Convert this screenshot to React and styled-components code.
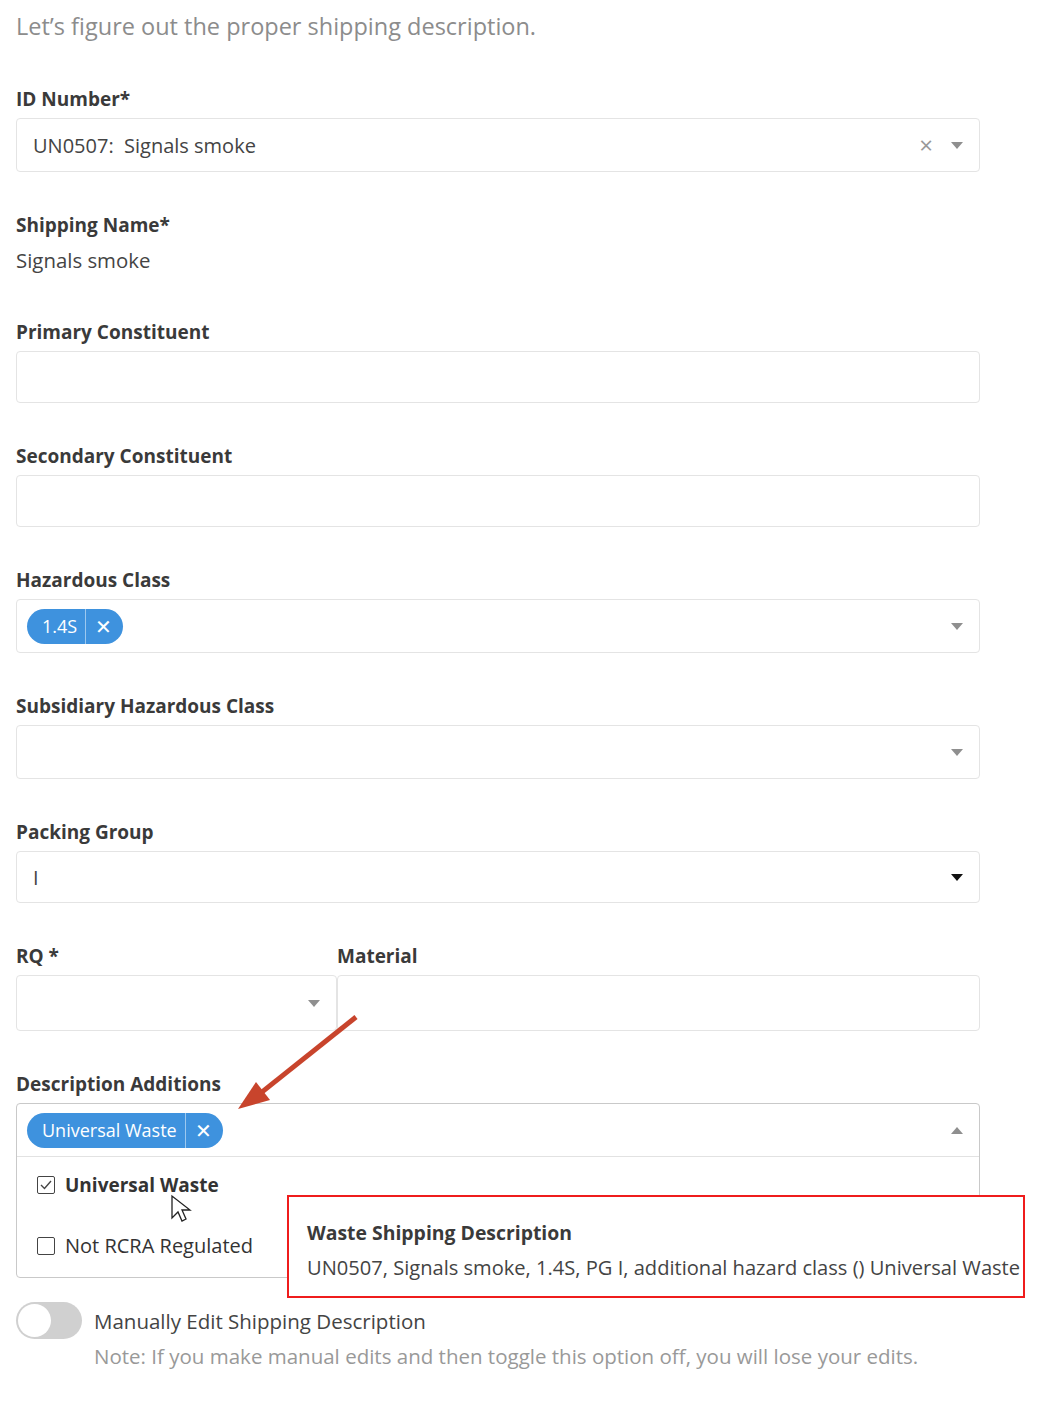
import React from "react";
import styled, { createGlobalStyle } from "styled-components";

const Global = createGlobalStyle`
  body {
    margin: 0;
    background: #fff;
    font-family: "Open Sans", "Noto Sans", sans-serif;
    color: #333;
  }
`;

const Page = styled.div`
  position: relative;
  width: 964px;
  padding: 8px 16px 40px;
`;

const Intro = styled.p`
  margin: 0 0 41px;
  font-size: 23.5px;
  line-height: 36px;
  color: #8c8c8c;
`;

const Field = styled.div`
  margin-bottom: ${(p) => p.gap || 39}px;
`;

const Label = styled.div`
  font-size: 19px;
  font-weight: 700;
  line-height: 28px;
  margin-bottom: 5px;
  color: #3a3a3a;
`;

const Value = styled.div`
  font-size: 20.4px;
  line-height: 32px;
  color: #444;
`;

const Box = styled.div`
  display: flex;
  align-items: center;
  height: ${(p) => p.h || 52}px;
  box-sizing: border-box;
  padding: 0 16px 0 ${(p) => (p.tags ? 10 : 16)}px;
  border: 1px solid #e4e4e4;
  border-radius: 4px;
  font-size: 20px;
  color: #444;
`;

const Grow = styled.div`
  flex: 1;
`;

const Caret = styled.span`
  width: 0;
  height: 0;
  margin-left: 18px;
  border-left: 6px solid transparent;
  border-right: 6px solid transparent;
  border-top: ${(p) => (p.up ? "none" : `7px solid ${p.dark ? "#111" : "#8f8f8f"}`)};
  border-bottom: ${(p) => (p.up ? "7px solid #8f8f8f" : "none")};
`;

const Clear = styled.span`
  color: #999;
  font-size: 24px;
  line-height: 1;
`;

const Tag = styled.span`
  display: inline-flex;
  align-items: stretch;
  height: 35px;
  border-radius: 18px;
  background: #3e92de;
  color: #fff;
  font-size: 18px;
  overflow: hidden;
`;

const TagText = styled.span`
  display: flex;
  align-items: center;
  padding: 0 8px 0 15px;
  border-right: 1px solid #9cc8ef;
`;

const TagX = styled.span`
  display: flex;
  align-items: center;
  padding: 0 11px 0 9px;
  font-size: 20px;
`;

const Row = styled.div`
  display: grid;
  grid-template-columns: 321px 1fr;
`;

const Combo = styled.div`
  border: 1px solid #c9c9c9;
  border-radius: 4px;
`;

const ComboHead = styled.div`
  display: flex;
  align-items: center;
  height: 52px;
  padding: 0 16px 0 10px;
  border-bottom: 1px solid #e2e2e2;
`;

const Options = styled.div`
  display: flex;
  flex-direction: column;
  gap: 34px;
  padding: 15px 20px 18px;
`;

const Option = styled.label`
  display: flex;
  align-items: center;
  gap: 10px;
  font-size: ${(p) => (p.checked ? 19 : 20)}px;
  font-weight: ${(p) => (p.checked ? 700 : 400)};
  color: #333;
`;

const Check = styled.span`
  display: flex;
  align-items: center;
  justify-content: center;
  width: 16px;
  height: 16px;
  border: 1.5px solid #444;
  border-radius: 2px;
`;

const ToggleRow = styled.div`
  display: flex;
  align-items: center;
  gap: 12px;
  margin-top: 24px;
`;

const Track = styled.span`
  position: relative;
  width: 66px;
  height: 37px;
  border-radius: 19px;
  background: #d0d0d0;
`;

const Knob = styled.span`
  position: absolute;
  left: 2px;
  top: 2px;
  width: 33px;
  height: 33px;
  border-radius: 50%;
  background: #fff;
`;

const ToggleLabel = styled.span`
  font-size: 20.5px;
  color: #444;
`;

const Note = styled.div`
  margin: 3px 0 0 78px;
  font-size: 20.5px;
  color: #999;
`;

const Callout = styled.div`
  position: absolute;
  left: 287px;
  top: 1195px;
  width: 738px;
  height: 103px;
  box-sizing: border-box;
  padding: 22px 0 0 18px;
  border: 2px solid #ef1c1c;
  background: #fff;
`;

const CalloutTitle = styled.div`
  font-size: 19.4px;
  font-weight: 700;
  color: #3a3a3a;
  margin-bottom: 8px;
`;

const CalloutText = styled.div`
  font-size: 20.1px;
  color: #444;
  white-space: nowrap;
`;

const Overlay = styled.svg`
  position: absolute;
  pointer-events: none;
`;

const Select = ({ children, clear, dark, up, tags, h }) => (
  <Box h={h} tags={tags}>
    <Grow>{children}</Grow>
    {clear && <Clear>×</Clear>}
    <Caret dark={dark} up={up} />
  </Box>
);

const Pill = ({ text }) => (
  <Tag>
    <TagText>{text}</TagText>
    <TagX>✕</TagX>
  </Tag>
);

const App = () => (
  <>
    <Global />
    <Page>
      <Intro>Let’s figure out the proper shipping description.</Intro>

      <Field>
        <Label>ID Number*</Label>
        <Select clear h={54}>UN0507:&nbsp; Signals smoke</Select>
      </Field>

      <Field gap={42}>
        <Label>Shipping Name*</Label>
        <Value>Signals smoke</Value>
      </Field>

      <Field>
        <Label>Primary Constituent</Label>
        <Box />
      </Field>

      <Field>
        <Label>Secondary Constituent</Label>
        <Box />
      </Field>

      <Field>
        <Label>Hazardous Class</Label>
        <Select tags h={54}>
          <Pill text="1.4S" />
        </Select>
      </Field>

      <Field>
        <Label>Subsidiary Hazardous Class</Label>
        <Select h={54} />
      </Field>

      <Field>
        <Label>Packing Group</Label>
        <Select dark>I</Select>
      </Field>

      <Field>
        <Row>
          <div>
            <Label>RQ *</Label>
            <Box h={56}>
              <Grow />
              <Caret />
            </Box>
          </div>
          <div>
            <Label>Material</Label>
            <Box h={56} />
          </div>
        </Row>
      </Field>

      <Label>Description Additions</Label>
      <Combo>
        <ComboHead>
          <Grow>
            <Pill text="Universal Waste" />
          </Grow>
          <Caret up />
        </ComboHead>
        <Options>
          <Option checked>
            <Check>
              <svg width="12" height="10" viewBox="0 0 12 10">
                <path d="M1 5l3.5 3.5L11 1" fill="none" stroke="#444" strokeWidth="1.4" />
              </svg>
            </Check>
            Universal Waste
          </Option>
          <Option>
            <Check />
            Not RCRA Regulated
          </Option>
        </Options>
      </Combo>

      <ToggleRow>
        <Track>
          <Knob />
        </Track>
        <ToggleLabel>Manually Edit Shipping Description</ToggleLabel>
      </ToggleRow>
      <Note>Note: If you make manual edits and then toggle this option off, you will lose your edits.</Note>

      <Callout>
        <CalloutTitle>Waste Shipping Description</CalloutTitle>
        <CalloutText>UN0507, Signals smoke, 1.4S, PG I, additional hazard class () Universal Waste</CalloutText>
      </Callout>

      <Overlay style={{ left: 230, top: 1008 }} width="140" height="110" viewBox="0 0 140 110">
        <line x1="126" y1="9" x2="22" y2="92" stroke="#c8442c" strokeWidth="5" />
        <polygon points="8,101 26,74 40,92" fill="#c8442c" />
      </Overlay>

      <Overlay style={{ left: 170, top: 1194 }} width="24" height="32" viewBox="0 0 24 32">
        <path d="M2 2v22l6-6 4 9 4-2-4-9h8z" fill="#fff" stroke="#222" strokeWidth="1.3" />
      </Overlay>
    </Page>
  </>
);

export default App;
